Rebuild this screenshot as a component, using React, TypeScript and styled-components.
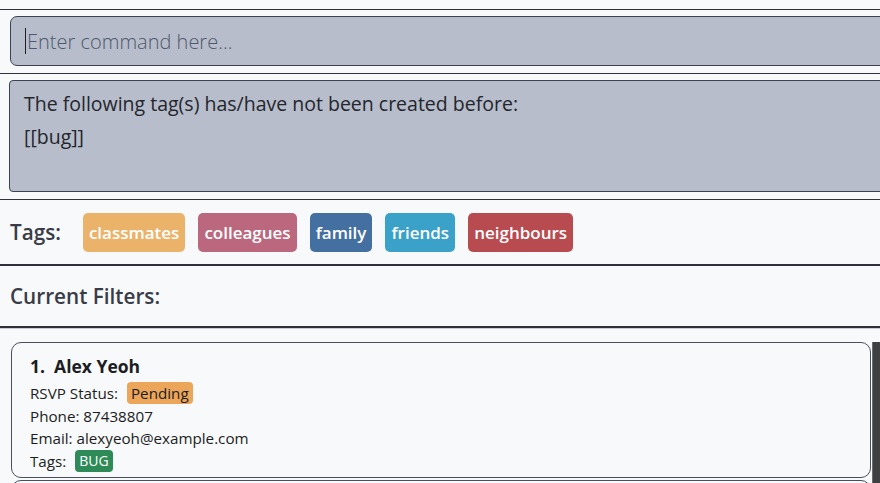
import React from 'react';
import styled, { createGlobalStyle } from 'styled-components';

const Global = createGlobalStyle`
  *, *::before, *::after {
    box-sizing: border-box;
  }
  html, body {
    margin: 0;
    padding: 0;
    background: #f8f9fb;
    overflow: hidden;
  }
  body {
    font-family: "Open Sans", "Noto Sans", sans-serif;
    color: #1f2229;
  }
`;

const Page = styled.div`
  width: 880px;
  height: 483px;
  display: flex;
  flex-direction: column;
  overflow: hidden;
  background: #f8f9fb;
`;

const TopStrip = styled.div`
  flex-shrink: 0;
  height: 10px;
  border-bottom: 1px solid #2d3038;
`;

const Pane = styled.div<{ $pad: string; $line: number; $height: number }>`
  flex-shrink: 0;
  height: ${(p) => p.$height}px;
  padding: ${(p) => p.$pad};
  border-bottom: ${(p) => p.$line}px solid #2f323b;
  overflow: hidden;
`;

const CommandBox = styled.div`
  height: 50px;
  margin-right: -12px;
  border: 1px solid #3d4250;
  border-radius: 7px;
  background: #b7bdca;
  display: flex;
  align-items: center;
  padding-left: 14px;
`;

const Caret = styled.span`
  width: 1px;
  height: 26px;
  background: #1d1f25;
  margin-right: 1px;
`;

const Placeholder = styled.span`
  font-size: 20px;
  font-weight: 300;
  color: #4f596d;
`;

const ResultBox = styled.div`
  height: 112px;
  margin-right: -12px;
  border: 1px solid #3d4250;
  border-radius: 4px;
  background: #b7bdca;
  padding: 6px 14px 0;
  font-size: 19.5px;
  line-height: 33px;
  color: #23262d;
`;

const Row = styled.div`
  display: flex;
  align-items: center;
  height: 100%;
`;

const SectionLabel = styled.span`
  font-size: 20.7px;
  font-weight: 600;
  color: #383c47;
  margin-right: 22px;
`;

const TagList = styled.div`
  display: flex;
  gap: 13px;
`;

const Tag = styled.span<{ $bg: string }>`
  background: ${(p) => p.$bg};
  color: #fff;
  font-size: 17px;
  font-weight: 600;
  height: 39px;
  line-height: 39px;
  padding: 0 6px;
  border-radius: 5px;
`;

const ListPane = styled.div`
  flex: 1;
  display: flex;
  padding-top: 13px;
  border-top: 1px solid #c9ccd3;
`;

const CardColumn = styled.div`
  flex: 1;
  padding-left: 11px;
  display: flex;
  flex-direction: column;
  gap: 2px;
`;

const Card = styled.div`
  flex-shrink: 0;
  border: 1px solid #4a4f5b;
  border-radius: 10px;
  background: #f8f9fb;
  padding: 9px 18px 5px;
  font-size: 15.2px;
  line-height: 22.5px;
  color: #1b1d22;
  height: 136px;
`;

const Name = styled.div`
  font-size: 17.5px;
  font-weight: 700;
  line-height: 28px;
  margin-bottom: 2px;
`;

const Field = styled.div`
  display: flex;
  align-items: center;
`;

const Chip = styled.span<{ $bg: string; $fg: string; $size: number }>`
  background: ${(p) => p.$bg};
  color: ${(p) => p.$fg};
  font-size: ${(p) => p.$size}px;
  border-radius: 4px;
  padding: 0 4px;
  margin-left: 9px;
  line-height: 22px;
`;

const Scrollbar = styled.div`
  width: 8px;
  margin-left: 1px;
  background: #3f4042;
  border-left: 1px solid #6a6b6e;
`;

const tags = [
  { name: 'classmates', color: '#ebb26a' },
  { name: 'colleagues', color: '#bb687e' },
  { name: 'family', color: '#436fa1' },
  { name: 'friends', color: '#3aa1c8' },
  { name: 'neighbours', color: '#b84b4f' },
];

export default function App() {
  return (
    <Page>
      <Global />
      <TopStrip />
      <Pane $pad="6px 0 6px 10px" $height={64} $line={1}>
        <CommandBox>
          <Caret />
          <Placeholder>Enter command here...</Placeholder>
        </CommandBox>
      </Pane>
      <Pane $pad="6px 0 6px 9px" $height={126} $line={1}>
        <ResultBox>
          The following tag(s) has/have not been created before:
          <br />
          [[bug]]
        </ResultBox>
      </Pane>
      <Pane $pad="0 0 0 10px" $height={66} $line={2}>
        <Row>
          <SectionLabel>Tags:</SectionLabel>
          <TagList>
            {tags.map((t) => (
              <Tag key={t.name} $bg={t.color}>{t.name}</Tag>
            ))}
          </TagList>
        </Row>
      </Pane>
      <Pane $pad="0 0 0 10px" $height={62} $line={2}>
        <Row>
          <SectionLabel>Current Filters:</SectionLabel>
        </Row>
      </Pane>
      <ListPane>
        <CardColumn>
          <Card>
            <Name>1.&nbsp; Alex Yeoh</Name>
            <Field>
              RSVP Status:
              <Chip $bg="#eca65a" $fg="#1b1d22" $size={15.2}>Pending</Chip>
            </Field>
            <Field>Phone: 87438807</Field>
            <Field>Email: alexyeoh@example.com</Field>
            <Field>
              Tags:
              <Chip $bg="#2e8b57" $fg="#fff" $size={14}>BUG</Chip>
            </Field>
          </Card>
          <Card />
        </CardColumn>
        <Scrollbar />
      </ListPane>
    </Page>
  );
}
